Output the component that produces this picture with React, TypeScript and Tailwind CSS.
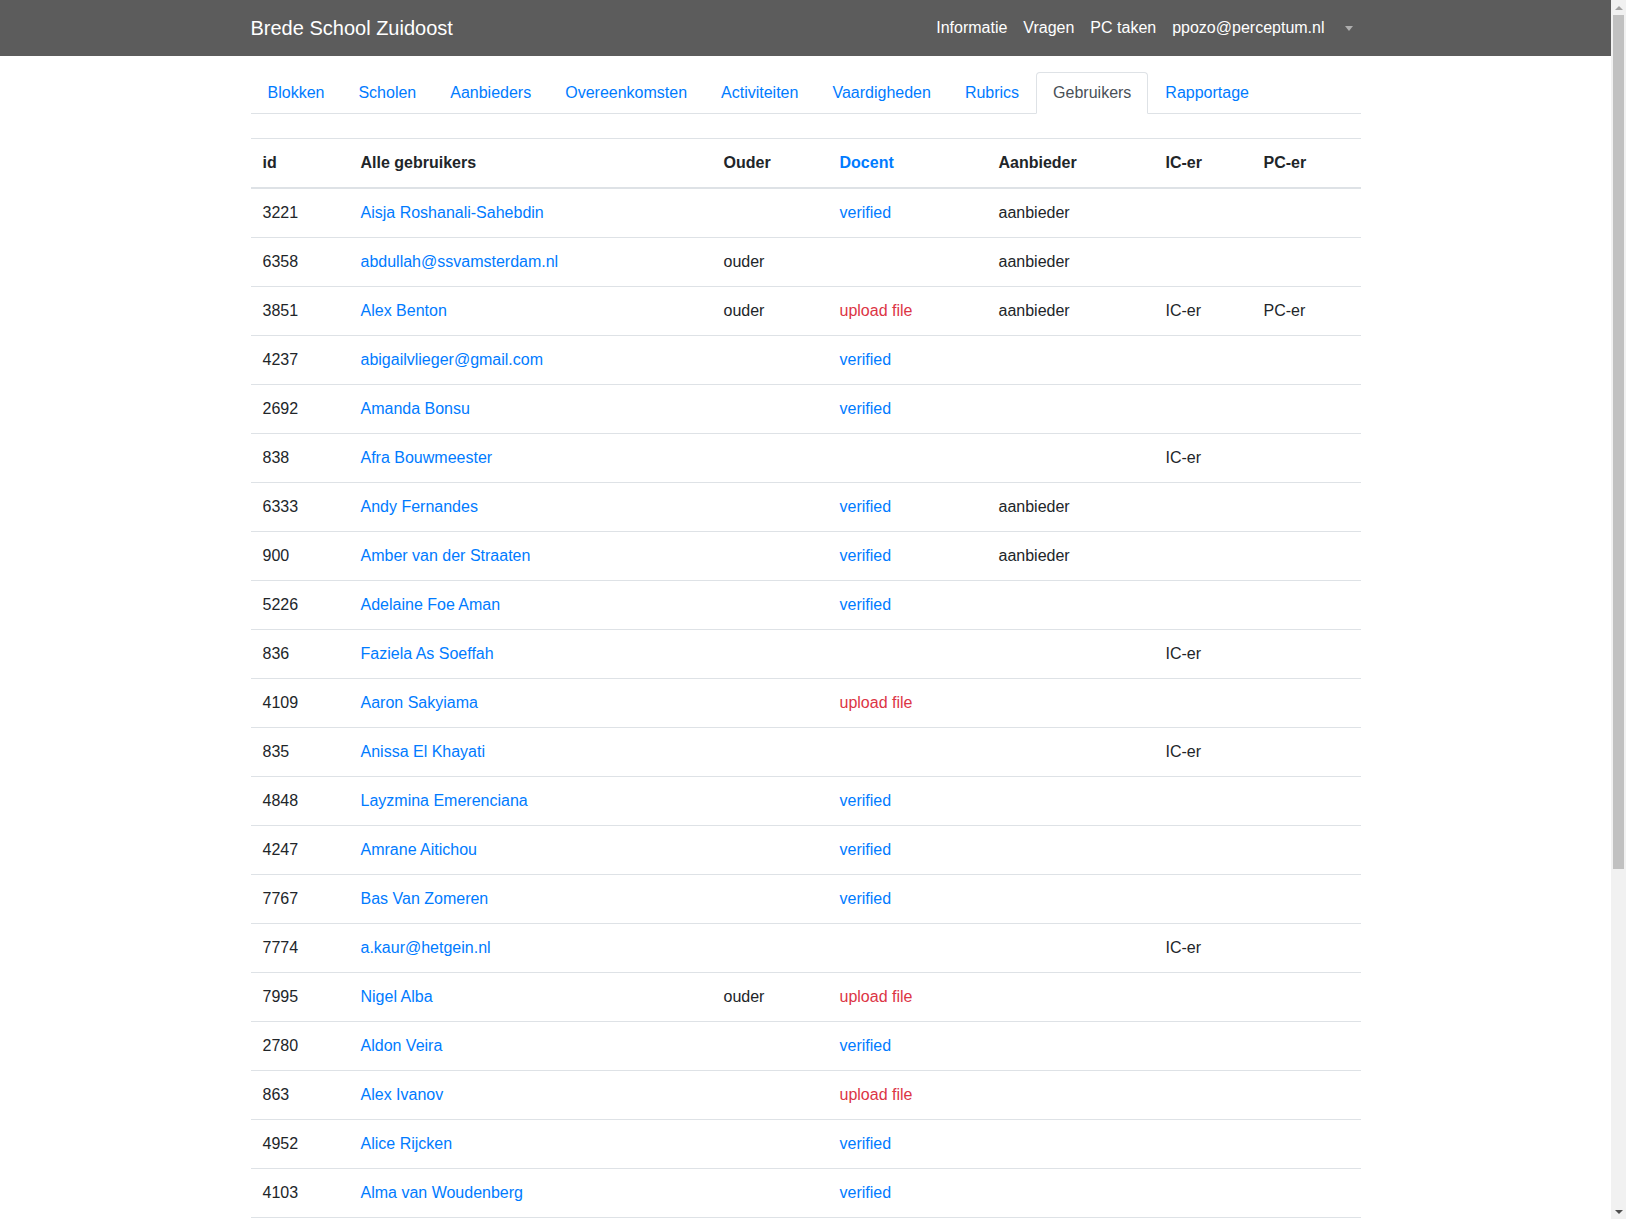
import React from "react";

type Gebruiker = {
  id: number;
  naam: string;
  ouder?: boolean;
  docent?: "verified" | "upload";
  aanbieder?: boolean;
  ic?: boolean;
  pc?: boolean;
};

const gebruikers: Gebruiker[] = [
  { id: 3221, naam: "Aisja Roshanali-Sahebdin", docent: "verified", aanbieder: true },
  { id: 6358, naam: "abdullah@ssvamsterdam.nl", ouder: true, aanbieder: true },
  { id: 3851, naam: "Alex Benton", ouder: true, docent: "upload", aanbieder: true, ic: true, pc: true },
  { id: 4237, naam: "abigailvlieger@gmail.com", docent: "verified" },
  { id: 2692, naam: "Amanda Bonsu", docent: "verified" },
  { id: 838, naam: "Afra Bouwmeester", ic: true },
  { id: 6333, naam: "Andy Fernandes", docent: "verified", aanbieder: true },
  { id: 900, naam: "Amber van der Straaten", docent: "verified", aanbieder: true },
  { id: 5226, naam: "Adelaine Foe Aman", docent: "verified" },
  { id: 836, naam: "Faziela As Soeffah", ic: true },
  { id: 4109, naam: "Aaron Sakyiama", docent: "upload" },
  { id: 835, naam: "Anissa El Khayati", ic: true },
  { id: 4848, naam: "Layzmina Emerenciana", docent: "verified" },
  { id: 4247, naam: "Amrane Aitichou", docent: "verified" },
  { id: 7767, naam: "Bas Van Zomeren", docent: "verified" },
  { id: 7774, naam: "a.kaur@hetgein.nl", ic: true },
  { id: 7995, naam: "Nigel Alba", ouder: true, docent: "upload" },
  { id: 2780, naam: "Aldon Veira", docent: "verified" },
  { id: 863, naam: "Alex Ivanov", docent: "upload" },
  { id: 4952, naam: "Alice Rijcken", docent: "verified" },
  { id: 4103, naam: "Alma van Woudenberg", docent: "verified" },
];

const tabs = [
  "Blokken",
  "Scholen",
  "Aanbieders",
  "Overeenkomsten",
  "Activiteiten",
  "Vaardigheden",
  "Rubrics",
  "Gebruikers",
  "Rapportage",
];

function Navbar() {
  return (
    <nav className="bg-[#5c5c5c] h-14">
      <div className="mx-auto w-[1140px] px-[15px] h-full flex items-center justify-between">
        <a href="#" className="text-white text-[20px] leading-[30px]">
          Brede School Zuidoost
        </a>
        <ul className="flex items-center text-white text-base">
          <li>
            <a href="#" className="block px-2 py-2">Informatie</a>
          </li>
          <li>
            <a href="#" className="block px-2 py-2">Vragen</a>
          </li>
          <li>
            <a href="#" className="block px-2 py-2">PC taken</a>
          </li>
          <li>
            <a href="#" className="block px-2 py-2">ppozo@perceptum.nl</a>
          </li>
          <li>
            <a href="#" className="flex items-center px-2 py-2 h-10">
              <span className="ml-1 w-0 h-0 border-t-[5px] border-t-[#aeaeae] border-x-[4.8px] border-x-transparent" />
            </a>
          </li>
        </ul>
      </div>
    </nav>
  );
}

function Tabs() {
  return (
    <ul className="flex border-b border-[#dee2e6] mt-4">
      {tabs.map((tab) => (
        <li key={tab} className="-mb-px">
          {tab === "Gebruikers" ? (
            <a
              href="#"
              className="block px-4 py-2 border border-[#dee2e6] border-b-white rounded-t bg-white text-[#495057]"
            >
              {tab}
            </a>
          ) : (
            <a
              href="#"
              className="block px-4 py-2 border border-transparent rounded-t text-[#007bff]"
            >
              {tab}
            </a>
          )}
        </li>
      ))}
    </ul>
  );
}

function Docent({ status }: { status?: "verified" | "upload" }) {
  if (status === "verified") {
    return <a href="#" className="text-[#007bff]">verified</a>;
  }
  if (status === "upload") {
    return <a href="#" className="text-[#dc3545]">upload file</a>;
  }
  return null;
}

// browser scrollbar as it appears in the screenshot
function Scrollbar() {
  return (
    <div className="w-[15px] h-full bg-[#f1f1f1] flex flex-col items-center shrink-0">
      <div className="h-[15px] flex items-center justify-center">
        <span className="w-0 h-0 border-b-[4px] border-b-[#a3a3a3] border-x-[4px] border-x-transparent" />
      </div>
      <div className="w-[11px] h-[854px] bg-[#c1c1c1]" />
      <div className="flex-1" />
      <div className="h-[15px] flex items-center justify-center">
        <span className="w-0 h-0 border-t-[4px] border-t-[#505050] border-x-[4px] border-x-transparent" />
      </div>
    </div>
  );
}

export default function App() {
  const td = "px-3 py-3 border-t border-[#dee2e6] align-top";
  const th = "px-3 py-3 border-t border-b-2 border-[#dee2e6] text-left font-bold align-bottom";

  return (
    <div className="h-screen flex overflow-hidden bg-white text-[#212529] text-base leading-6 font-['Liberation_Sans',Arial,sans-serif]">
      <div className="flex-1 min-w-0 overflow-hidden">
        <Navbar />
        <div className="mx-auto w-[1140px] px-[15px]">
          <Tabs />
          <table className="w-full table-fixed border-collapse mt-6">
            <thead>
              <tr>
                <th className={th + " w-[98px]"}>id</th>
                <th className={th + " w-[363px]"}>Alle gebruikers</th>
                <th className={th + " w-[116px]"}>Ouder</th>
                <th className={th + " w-[159px]"}>
                  <a href="#" className="text-[#007bff]">Docent</a>
                </th>
                <th className={th + " w-[167px]"}>Aanbieder</th>
                <th className={th + " w-[98px]"}>IC-er</th>
                <th className={th + " w-[109px]"}>PC-er</th>
              </tr>
            </thead>
            <tbody className="border-b border-[#dee2e6]">
              {gebruikers.map((g) => (
                <tr key={g.id}>
                  <td className={td}>{g.id}</td>
                  <td className={td}>
                    <a href="#" className="text-[#007bff]">{g.naam}</a>
                  </td>
                  <td className={td}>{g.ouder ? "ouder" : ""}</td>
                  <td className={td}>
                    <Docent status={g.docent} />
                  </td>
                  <td className={td}>{g.aanbieder ? "aanbieder" : ""}</td>
                  <td className={td}>{g.ic ? "IC-er" : ""}</td>
                  <td className={td}>{g.pc ? "PC-er" : ""}</td>
                </tr>
              ))}
            </tbody>
          </table>
        </div>
      </div>
      <Scrollbar />
    </div>
  );
}
